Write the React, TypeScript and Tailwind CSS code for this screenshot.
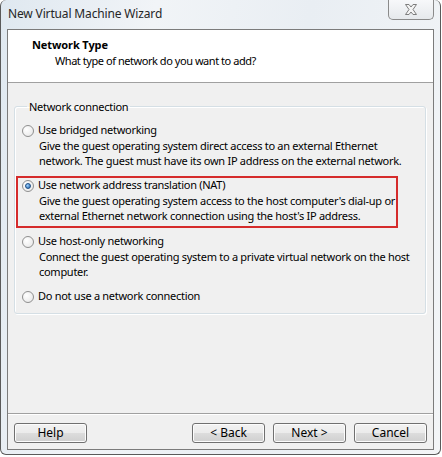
const font = "font-['Segoe_UI','Noto_Sans',sans-serif]";

function Radio({ checked }: { checked?: boolean }) {
  return (
    <span className="relative flex items-center justify-center w-[12px] h-[12px] rounded-full border border-[#8f8f8f] bg-[radial-gradient(circle_at_35%_35%,#ffffff,#e4e4e4)] shrink-0">
      {checked && (
        <span className="w-[6px] h-[6px] rounded-full bg-[radial-gradient(circle_at_35%_35%,#9fd3ff,#1e5fa8)] border border-[#1d4f86]" />
      )}
    </span>
  );
}

function Option({
  label,
  desc,
  checked,
}: {
  label: string;
  desc?: string[];
  checked?: boolean;
}) {
  return (
    <div className="flex flex-col">
      <div className="flex items-center gap-[4px] h-[15px]">
        <Radio checked={checked} />
        <span>{label}</span>
      </div>
      {desc && (
        <div className="pl-[17px] flex flex-col">
          {desc.map((d) => (
            <span key={d} className="h-[15px] leading-[15px]">
              {d}
            </span>
          ))}
        </div>
      )}
    </div>
  );
}

function Btn({ children }: { children: string }) {
  return (
    <button className="w-[73px] h-[20px] rounded-[3px] border border-[#707070] bg-[linear-gradient(#f2f2f2_0%,#ebebeb_50%,#dddddd_50%,#cfcfcf_100%)] shadow-[inset_0_0_0_1px_#fcfcfc] leading-[18px] text-black">
      {children}
    </button>
  );
}

export default function App() {
  return (
    <div className={`w-[442px] h-[457px] bg-white ${font} text-[11px] tracking-[-0.28px] whitespace-nowrap text-black`}>
      <div className="relative w-[441px] h-[455px] rounded-[6px] border border-[#5a5a5a] border-t-0 bg-[linear-gradient(100deg,#dfe8f0_0%,#f1f4f7_30%,#e9eef3_60%,#f3f5f7_100%)] flex flex-col">
        {/* title bar */}
        <div className="h-[29px] flex items-center pl-[7px] pb-[1px] text-[12px] tracking-[-0.15px] text-[#262626]">
          New Virtual Machine Wizard
        </div>
        <div className="absolute top-0 right-[6px] w-[46px] h-[20px] rounded-b-[5px] border border-t-0 border-[#8a8a8a] bg-[linear-gradient(#f7f8fa,#e6e9ec)] flex items-center justify-center">
          <svg width="14" height="11" viewBox="0 0 14 11">
            <path
              d="M1.5 0.5 H5 L7 3 L9 0.5 H12.5 L9 5.5 L12.5 10.5 H9 L7 8 L5 10.5 H1.5 L5 5.5 Z"
              fill="#f4f4f4"
              stroke="#7d7d7d"
              strokeWidth="1"
              strokeLinejoin="round"
            />
          </svg>
        </div>

        {/* client */}
        <div className="mx-[6px] h-[421px] border border-[#7b7b7b] flex flex-col bg-[#f0f0f0]">
          <div className="h-[53px] bg-white border-b border-[#a0a0a0] pl-[24px] pt-[7px] flex flex-col">
            <span className="font-bold leading-[15px] tracking-[-0.1px]">Network Type</span>
            <span className="pl-[23px] mt-[1px] leading-[15px] tracking-[-0.45px]">
              What type of network do you want to add?
            </span>
          </div>

          <div className="flex-1 px-[6px] pt-[16px]">
            <fieldset className="w-[412px] h-[215px] border border-[#d5dfe5] rounded-[3px] shadow-[inset_1px_1px_0_#ffffff,1px_1px_0_#ffffff] pl-[7px] pt-[9px]">
              <legend className="ml-[5px] px-[2px] leading-[15px]">
                Network connection
              </legend>
              <div className="flex flex-col">
                <Option
                  label="Use bridged networking"
                  desc={[
                    "Give the guest operating system direct access to an external Ethernet",
                    "network. The guest must have its own IP address on the external network.",
                  ]}
                />
                <div className="mt-[8px] -ml-[6px] pl-[4px] w-[382px] pb-[3px] border-2 border-[#d52b2b]">
                  <Option
                    checked
                    label="Use network address translation (NAT)"
                    desc={[
                      "Give the guest operating system access to the host computer's dial-up or",
                      "external Ethernet network connection using the host's IP address.",
                    ]}
                  />
                </div>
                <div className="mt-[6px]">
                  <Option
                    label="Use host-only networking"
                    desc={[
                      "Connect the guest operating system to a private virtual network on the host",
                      "computer.",
                    ]}
                  />
                </div>
                <div className="mt-[10px]">
                  <Option label="Do not use a network connection" />
                </div>
              </div>
            </fieldset>
          </div>

          <div className="h-[36px] border-t border-[#a0a0a0] shadow-[inset_0_1px_0_#ffffff] flex items-start pt-[9px] px-[6px] gap-[8px] text-[12px] tracking-normal">
            <Btn>Help</Btn>
            <div className="flex-1" />
            <Btn>&lt; Back</Btn>
            <Btn>Next &gt;</Btn>
            <Btn>Cancel</Btn>
          </div>
        </div>
      </div>
    </div>
  );
}
